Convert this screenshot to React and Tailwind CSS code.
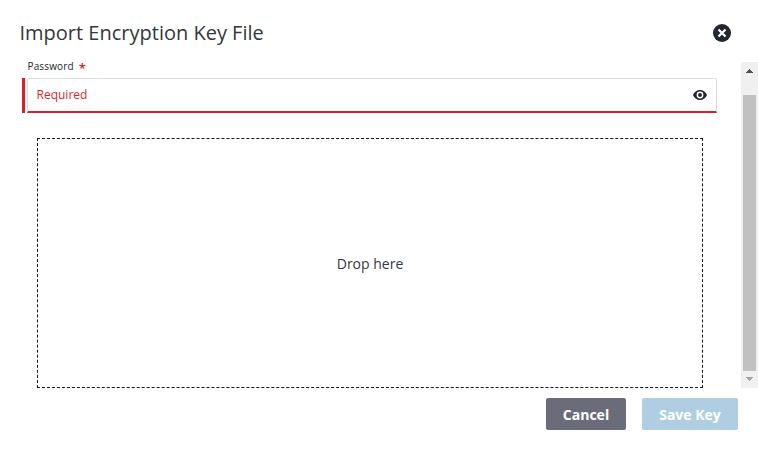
import React, { useState } from 'react';

const CloseIcon = () => (
  <svg className="w-[18px] h-[18px]" viewBox="0 0 18 18">
    <circle cx="9" cy="9" r="9" fill="#22282d" />
    <path d="M5.500 5.500l7 7M12.500 5.500l-7 7" stroke="#fff" strokeWidth="2.200" />
  </svg>
);

const EyeIcon = () => (
  <svg className="w-[14px] h-[10px]" viewBox="0 0 14 10">
    <path
      fill="#24282d"
      fillRule="evenodd"
      d="M7 0C3.8 0 1.1 2.1 0 5c1.1 2.9 3.8 5 7 5s5.900-2.100 7-5C12.900 2.100 10.200 0 7 0zM7 8.400a3.400 3.400 0 110-6.800 3.400 3.400 0 010 6.800z"
    />
    <circle cx="7" cy="5" r="2" fill="#24282d" />
  </svg>
);

const ScrollBar = () => (
  <div className="w-[17px] shrink-0 bg-[#f0f0f0] flex flex-col items-center">
    <div className="h-[33px] pt-[7px]">
      <svg className="w-[7px] h-1" viewBox="0 0 7 4" shapeRendering="crispEdges">
        <path d="M3 0h1v1h1v1h1v1h1v1H0V3h1V2h1V1h1z" fill="#505050" />
      </svg>
    </div>
    <div className="w-[13px] h-[276px] bg-[#c1c1c1]" />
    <div className="h-[17px] pt-[6px]">
      <svg className="w-[7px] h-1" viewBox="0 0 7 4" shapeRendering="crispEdges">
        <path d="M0 0h7v1H6v1H5v1H4v1H3V3H2V2H1V1H0z" fill="#a3a3a3" />
      </svg>
    </div>
  </div>
);

const PasswordField = () => {
  const [value, setValue] = useState('');
  const [visible, setVisible] = useState(false);

  return (
    <div className="pl-[22px]">
      <label htmlFor="password" className="flex h-4 pl-[5.5px] text-[10px] leading-[8px] text-[#22282d]">
        <span className="tracking-[0.15px]">Password</span>
        <span className="ml-[5px] text-[13px] leading-[13px] font-semibold text-[#da1e28]">*</span>
      </label>
      <div className="flex gap-[2px] h-[35px]">
        <div className="w-[3px] bg-[#da1f2c]" />
        <div className="w-[690px] flex items-center rounded-t-[2px] border border-[#dcdcdc] border-b-2 border-b-[#da1f2c] pl-[8.5px] pr-[9px]">
          <input
            id="password"
            type={visible ? 'text' : 'password'}
            value={value}
            onChange={(e) => setValue(e.target.value)}
            placeholder="Required"
            className="flex-1 h-full pb-[2px] text-xs outline-none placeholder:text-[#da1f2c]"
          />
          <button type="button" aria-label="Show password" onClick={() => setVisible(!visible)}>
            <EyeIcon />
          </button>
        </div>
      </div>
    </div>
  );
};

const DropZone = () => (
  <div className="ml-[37px] mt-[25px] w-[666px] h-[250px] border border-dashed border-[#15181b] pt-[2px] flex items-center justify-center text-sm text-[#33383d]">
    Drop here
  </div>
);

const App = () => (
  <div className="w-full h-[452px] bg-white flex flex-col font-['Open_Sans',sans-serif] overflow-hidden">
    <header className="h-[62px] pl-[19.5px] pr-[27px] pt-1 flex items-center justify-between">
      <h1 className="text-xl text-[#33383d]">Import Encryption Key File</h1>
      <button type="button" aria-label="Close">
        <CloseIcon />
      </button>
    </header>
    <main className="h-[326px] flex">
      <div className="flex-1">
        <PasswordField />
        <DropZone />
      </div>
      <ScrollBar />
    </main>
    <footer className="pt-[10px] pr-5 flex justify-end gap-4 text-sm font-bold text-white">
      <button type="button" className="w-20 h-8 pt-[2px] rounded-[2px] bg-[#6a6d79]">
        Cancel
      </button>
      <button type="button" disabled className="w-24 h-8 pt-[2px] rounded-[2px] bg-[#b0cee2]">
        Save Key
      </button>
    </footer>
  </div>
);

export default App;
